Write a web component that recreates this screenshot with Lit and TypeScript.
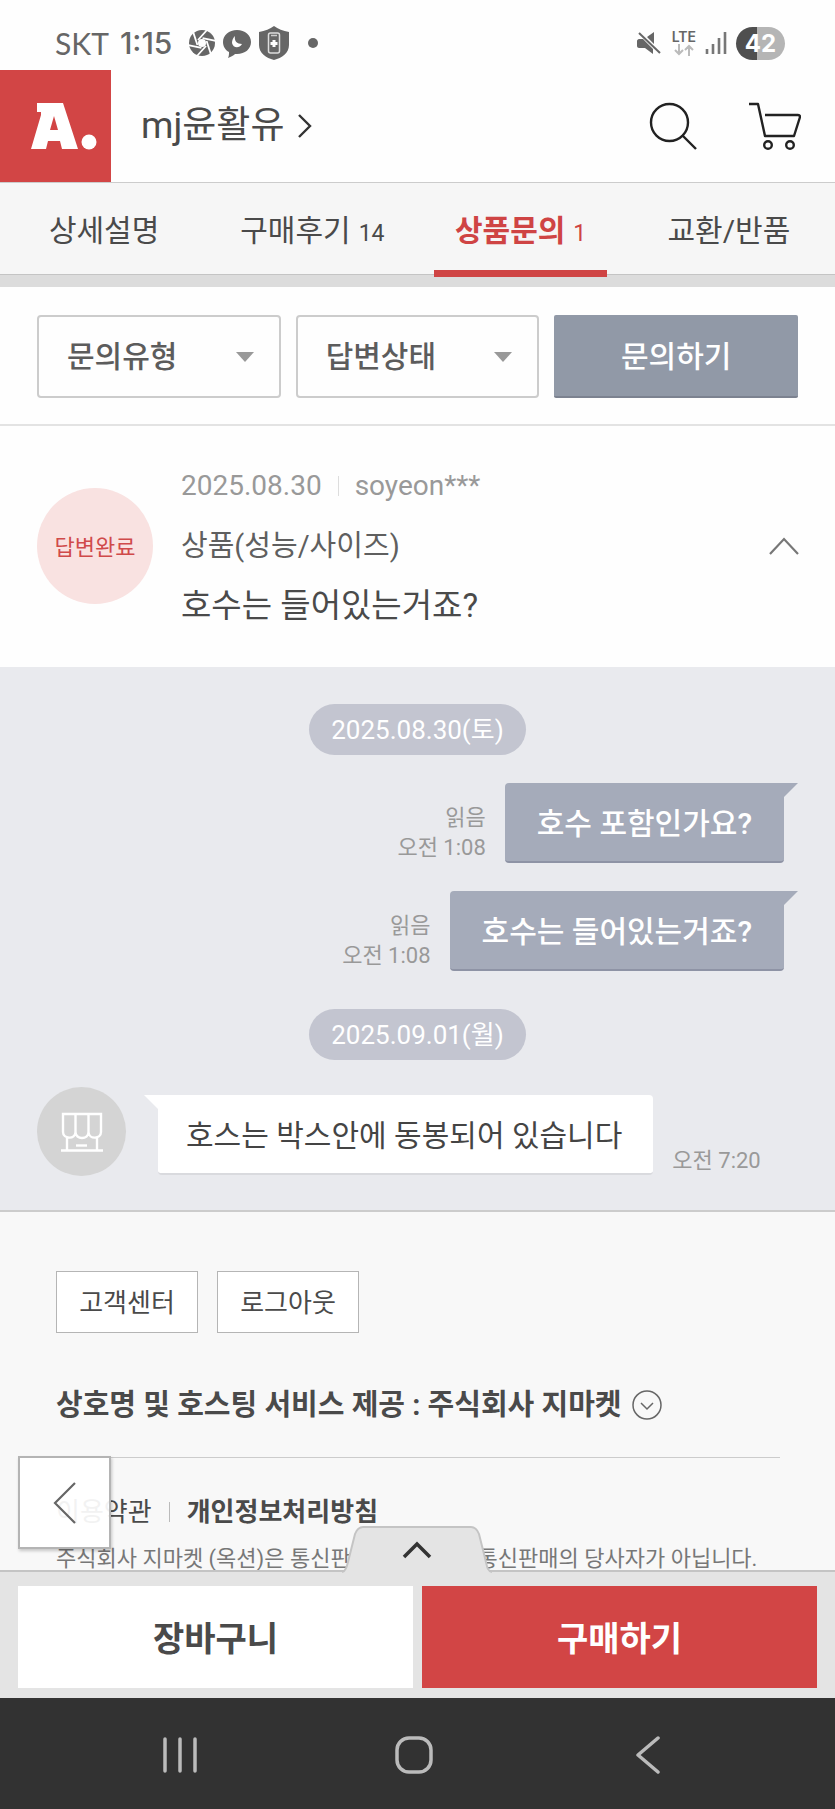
import { LitElement, html, svg, css } from "lit";
import { customElement, property } from "lit/decorators.js";

@customElement("status-bar")
class StatusBar extends LitElement {
  static styles = css`
    :host { display: flex; align-items: center; justify-content: space-between; height: 70px; padding: 16px 50px 0 55px; box-sizing: border-box; color: #666; font-family: Inter, Roboto, sans-serif; }
    .side { display: flex; align-items: center; }
    .carrier { font: 400 30px/36px Lato, sans-serif; margin-right: 11px; }
    .time { font-size: 30px; line-height: 36px; font-weight: 500; margin-right: 10px; }
    .apps { gap: 6px; }
    svg { display: block; }
    .right { gap: 9px; }
    .lte { display: flex; flex-direction: column; align-items: center; font-size: 14px; line-height: 14px; font-weight: 600; }
    .battery { display: grid; place-items: center; width: 49px; height: 33px; border-radius: 17px; background: linear-gradient(90deg, #4f4f4f 42%, #b5b5b5 42%); color: #fff; font-size: 24px; line-height: 33px; font-weight: 700; }
  `;
  render() {
    return html`
      <div class="side apps">
        <div class="side"><span class="carrier">SKT</span><span class="time">1:15</span></div>
        <svg width="28" height="28" viewBox="0 0 28 28"><circle cx="14" cy="14" r="13" fill="#666"/><circle cx="14" cy="14" r="4" fill="#fff"/>${[0, 60, 120, 180, 240, 300].map((a) => svg`<path d="M10 11L19 1" transform="rotate(${a} 14 14)" stroke="#fff" stroke-width="1.800"/>`)}</svg>
        <svg width="30" height="30" viewBox="0 0 30 30"><path d="M15 2c8 0 14 5 14 12s-6 12-14 12h-2c-1 1-4 3-7 4 1-2 1-4 1-6-4-2-6-6-6-10C1 7 7 2 15 2z" fill="#666"/><path d="M13 8c-1 5 2 8 7 8-3 5-9 4-10-1 0-3 1-5 3-7z" fill="#fff"/></svg>
        <svg width="32" height="36" viewBox="0 0 32 36"><path d="M16 1c4 3 9 5 15 6v13c0 8-7 13-15 15C8 33 1 28 1 20V7c6-1 11-3 15-6z" fill="#666"/><rect x="10.500" y="8" width="11" height="20" rx="2" fill="none" stroke="#ddd" stroke-width="1.500"/><path d="M13 10.500h6" stroke="#ccc" stroke-width="1.500"/><path d="M16 15v7M12.500 18.500h7" stroke="#fff" stroke-width="3"/></svg>
        <svg width="30" height="12" viewBox="0 0 30 12"><circle cx="17" cy="6" r="5" fill="#666"/></svg>
      </div>
      <div class="side right">
        <svg width="26" height="24" viewBox="0 0 26 24"><path d="M2 8h4l10 10v5l-8-6H2c-1 0-2-1-2-2v-5c0-1 1-2 2-2zM10 6l7-5v12z" fill="#666"/><path d="m2 2 21 20" stroke="#666" stroke-width="2"/></svg>
        <div class="lte"><span>LTE</span><svg width="20" height="12" viewBox="0 0 20 12" fill="none" stroke="#bbb" stroke-width="2"><path d="M5 0v10M1 6l4 4 4-4M15 12V2M11 6l4-4 4 4"/></svg></div>
        <svg width="22" height="24" viewBox="0 0 22 24" stroke="#777" stroke-width="2.600"><path d="M2 18v5M8 13v10M14 7v16M20 1v22"/></svg>
        <div class="battery">42</div>
      </div>`;
  }
}

@customElement("chat-bubble")
class ChatBubble extends LitElement {
  @property({ type: Boolean, reflect: true }) seller = false;
  @property() text = "";
  @property() time = "";
  static styles = css`
    :host { display: flex; align-items: flex-end; justify-content: flex-end; gap: 19px; padding-right: 14px; }
    :host([seller]) { justify-content: flex-start; align-items: flex-start; padding: 0; }
    .meta { text-align: right; color: #999; font-size: 22px; line-height: 30px; }
    :host([seller]) .meta { align-self: flex-end; }
    .bubble { position: relative; box-sizing: border-box; height: 80px; padding: 2px 32px 0; border-radius: 4px; border-bottom: 2px solid #8e93a5; background: #a5abba; color: #fff; font-size: 30px; line-height: 78px; font-weight: 500; white-space: nowrap; }
    .bubble::after { content: ""; position: absolute; top: 0; left: calc(100% - 4px); width: 18px; height: 14px; background: #a5abba; clip-path: polygon(0 0, 100% 0, 4px 100%, 0 100%); }
    .avatar { display: grid; place-items: center; width: 89px; height: 89px; border-radius: 50%; background: #d4d4d4; margin-right: 13px; }
    :host([seller]) .bubble { margin-top: 8px; background: #fff; border-color: #d9dade; color: #444; font-weight: 400; padding: 2px 31px 0 28px; }
    :host([seller]) .bubble::after { left: -14px; background: #fff; clip-path: polygon(0 0, 100% 0, 100% 100%, 14px 100%); }
  `;
  render() {
    return this.seller
      ? html`<div class="avatar"><svg width="42" height="40" viewBox="0 0 42 40" fill="none" stroke="#fff" stroke-width="2.400"><path d="M2 2h38v18c0 7-12 8-12.500 0 0 8-13 8-13 0 0 8-12.500 7-12.500 0zM14.500 2v18M27.500 2v18M6 25v13M36 25v13M0 38.500h42"/><path d="M15 33.500h11"/></svg></div>
          <div class="bubble">${this.text}</div><div class="meta">${this.time}</div>`
      : html`<div class="meta">읽음<br />${this.time}</div><div class="bubble">${this.text}</div>`;
  }
}

@customElement("app-root")
class AppRoot extends LitElement {
  static styles = css`
    :host { display: flex; flex-direction: column; height: 100vh; background: #fefefe; color: #4a4a4a; font-family: Roboto, "Noto Sans CJK KR", sans-serif; font-size: 30px; }
    * { box-sizing: border-box; }
    button, select { font-family: inherit; margin: 0; padding: 0; border: 0; background: none; color: inherit; cursor: pointer; }
    a { color: inherit; text-decoration: none; }
    svg { display: block; }
    h1, h2, p { margin: 0; font-size: inherit; font-weight: 400; }
    header { display: flex; align-items: center; height: 113px; border-bottom: 1px solid #ccc; flex: none; }
    .logo { width: 111px; height: 112px; background: #d24545; }
    .shop { display: flex; align-items: center; gap: 14px; margin-left: 30px; font-size: 37px; line-height: 44px; }
    .tools { display: flex; gap: 52px; margin-left: auto; padding-right: 34px; }
    nav.tabs { display: grid; grid-template-columns: repeat(4, 1fr); justify-items: center; height: 104px; padding: 0 2px 0 0; border-bottom: 12px solid #dcdcdc; background: #f6f6f6; flex: none; box-shadow: inset 0 -1px #c4c4c4; }
    .tabs a { height: 94px; line-height: 96px; white-space: nowrap; }
    .tabs small { margin-left: 8px; font-size: 23px; font-weight: 400; }
    .tabs .active { position: relative; padding: 0 21px; border-bottom: 7px solid #cf4444; color: #cf4444; font-weight: 700; }
    .filters { display: grid; grid-template-columns: repeat(3, 1fr); gap: 15px; padding: 28px 37px 26px; border-bottom: 2px solid #e3e3e3; flex: none; }
    .pick { display: grid; align-items: center; grid-template-columns: 1fr 45px; }
    .pick select { grid-area: 1 / 1 / 2 / 3; appearance: none; height: 83px; border: 2px solid #ccc; border-radius: 4px; padding: 0 28px; font-size: 30px; font-weight: 500; color: #5c5c5c; }
    .pick svg { grid-area: 1 / 2; pointer-events: none; }
    .ask { height: 83px; padding-bottom: 3px; border-radius: 2px; border-bottom: 2px solid #7c8290; background: #9199a7; color: #fff; font-size: 30px; font-weight: 500; }
    .question { display: flex; align-items: center; gap: 28px; padding: 30px 36px 31px 37px; flex: none; }
    .state { display: grid; place-items: center; width: 116px; height: 116px; padding-bottom: 3px; border-radius: 50%; background: #f9e2e1; color: #d04a4a; font-size: 22px; }
    .detail { display: flex; flex-direction: column; flex: 1; }
    .detail > * { line-height: 60px; }
    .byline { display: flex; align-items: center; gap: 16px; color: #999; font-size: 28px; }
    .bar { width: 1px; height: 20px; background: #ddd; }
    .kind { font-size: 29px; color: #5f5f5f; }
    .title { font-size: 33px; }
    .chat { display: flex; flex-direction: column; gap: 28px; padding: 37px 37px 34px; border-bottom: 2px solid #ccc; background: #e9eaee; flex: none; }
    .day { align-self: center; height: 51px; padding: 1px 22px 0; border-radius: 26px; background: #c3c5d0; color: #fff; font-size: 26px; line-height: 51px; }
    .day + chat-bubble[seller] { margin-top: -1px; }
    chat-bubble + .day { margin-top: 10px; }
    footer { flex: 1; min-height: 0; overflow: hidden; padding: 59px 55px 0 56px; background: #f8f8f8; }
    .links { display: flex; gap: 19px; }
    .links a { width: 142px; height: 62px; border: 1px solid #b5b5b5; background: #fff; font-size: 26px; line-height: 62px; text-align: center; }
    .company { display: flex; align-items: center; gap: 10px; margin-top: 49px; padding-bottom: 29px; border-bottom: 1px solid #ccc; }
    .company h2 { font-size: 29px; line-height: 46px; font-weight: 700; }
    .terms { display: flex; align-items: center; gap: 17px; margin-top: 34px; font-size: 26px; line-height: 40px; }
    .terms .bar { background: #bbb; }
    .note { margin-top: 11px; font-size: 22px; line-height: 32px; color: #777; white-space: nowrap; }
    .buybar { position: relative; display: grid; grid-template-columns: 1fr 1fr; gap: 9px; height: 128px; padding: 14px 18px 10px; border-top: 2px solid #c4c4c4; background: #e4e4e4; flex: none; }
    .buybar .cart, .buybar .buy { padding-bottom: 2px; background: #fff; font-size: 34px; font-weight: 700; }
    .buybar .buy { background: #d24545; color: #fff; }
    .pull { position: absolute; left: 50%; bottom: 100%; margin: 0 0 -1px -76px; }
    .back { position: absolute; left: 18px; bottom: 100%; margin-bottom: 23px; display: grid; place-items: center; width: 93px; height: 93px; border: 2px solid #b4b4b4; background: rgba(255, 255, 255, .93); box-shadow: 1px 2px 3px rgba(0, 0, 0, .2); }
    .keys { display: grid; grid-template-columns: 1fr 1fr 1fr; align-items: center; height: 111px; padding: 3px 70px 0 63px; background: #323232; flex: none; }
    .keys button { display: grid; place-items: center; height: 60px; }
  `;
  render() {
    return html`
      <status-bar></status-bar>
      <header>
        <a class="logo" href="#" aria-label="홈"><svg width="111" height="112" viewBox="0 0 111 112" fill="#fff"><path fill-rule="evenodd" d="M37 33h26l15 46H62l-2-8H48l-2 8H31l10-34v-3h-4zM54 46l-4 14h8z"/><circle cx="89" cy="72" r="7.500"/></svg></a>
        <a class="shop" href="#"><h1>mj윤활유</h1><svg width="14" height="26" viewBox="0 0 14 26" fill="none" stroke="#333" stroke-width="2.400"><path d="M1 2l11 11L1 24"/></svg></a>
        <div class="tools">
          <button aria-label="검색"><svg width="48" height="48" viewBox="0 0 48 48" fill="none" stroke="#222" stroke-width="2.400"><circle cx="20.500" cy="20.500" r="18.500"/><path d="M33 33l14 14"/></svg></button>
          <button aria-label="장바구니 보기"><svg width="52" height="48" viewBox="0 0 52 48" fill="none" stroke="#222" stroke-width="2.400" stroke-linejoin="round"><path d="M0 2h9l7 32h29l6-19c0-2-1-2-2-2H16"/><circle cx="19" cy="43" r="3.800"/><circle cx="41" cy="43" r="3.800"/></svg></button>
        </div>
      </header>
      <nav class="tabs">
        <a href="#">상세설명</a>
        <a href="#">구매후기<small>14</small></a>
        <a href="#" class="active">상품문의<small>1</small></a>
        <a href="#">교환/반품</a>
      </nav>
      <div class="filters">
        ${["문의유형", "답변상태"].map((t) => html`<div class="pick"><select aria-label=${t}><option>${t}</option></select><svg width="18" height="10" viewBox="0 0 18 10"><path d="M0 0h18L9 10z" fill="#999"/></svg></div>`)}
        <button class="ask">문의하기</button>
      </div>
      <section class="question">
        <div class="state">답변완료</div>
        <div class="detail">
          <div class="byline"><span>2025.08.30</span><i class="bar"></i><span>soyeon***</span></div>
          <p class="kind">상품(성능/사이즈)</p>
          <p class="title">호수는 들어있는거죠?</p>
        </div>
        <button aria-label="접기"><svg width="30" height="18" viewBox="0 0 30 18" fill="none" stroke="#777" stroke-width="2.200"><path d="M1 17L15 2l14 15"/></svg></button>
      </section>
      <section class="chat">
        <div class="day">2025.08.30(토)</div>
        <chat-bubble text="호수 포함인가요?" time="오전 1:08"></chat-bubble>
        <chat-bubble text="호수는 들어있는거죠?" time="오전 1:08"></chat-bubble>
        <div class="day">2025.09.01(월)</div>
        <chat-bubble seller text="호스는 박스안에 동봉되어 있습니다" time="오전 7:20"></chat-bubble>
      </section>
      <footer>
        <div class="links"><a href="#">고객센터</a><a href="#">로그아웃</a></div>
        <div class="company"><h2>상호명 및 호스팅 서비스 제공 : 주식회사 지마켓</h2><button aria-label="사업자 정보 펼치기"><svg width="30" height="30" viewBox="0 0 30 30" fill="none" stroke="#666" stroke-width="1.500"><circle cx="15" cy="15" r="14"/><path d="M9 13l6 6 6-6"/></svg></button></div>
        <div class="terms"><a href="#">이용약관</a><i class="bar"></i><a href="#"><b>개인정보처리방침</b></a></div>
        <p class="note">주식회사 지마켓 (옥션)은 통신판매중개자이며 통신판매의 당사자가 아닙니다.</p>
      </footer>
      <div class="buybar">
        <button class="back" aria-label="뒤로"><svg width="24" height="42" viewBox="0 0 24 42" fill="none" stroke="#666" stroke-width="2.200"><path d="M22 1L2 21l20 20"/></svg></button>
        <button class="pull" aria-label="옵션 열기"><svg width="150" height="47" viewBox="0 0 150 47"><path d="M0 46c4-1 5-6 7-14l6-24c2-5 4-7 8-7h108c4 0 6 2 8 7l6 24c2 8 2 13 7 14v1H0z" fill="#e4e4e4"/><path d="M0 46c4-1 5-6 7-14l6-24c2-5 4-7 8-7h108c4 0 6 2 8 7l6 24c2 8 2 13 7 14" fill="none" stroke="#c4c4c4" stroke-width="2"/><path d="M62 31l13-13 13 13" fill="none" stroke="#333" stroke-width="3.500"/></svg></button>
        <button class="cart">장바구니</button>
        <button class="buy">구매하기</button>
      </div>
      <nav class="keys">
        <button aria-label="최근 앱"><svg width="34" height="36" viewBox="0 0 34 36" stroke="#bbb" stroke-width="3.500" stroke-linecap="round"><path d="M2 2v32M17 2v32M32 2v32"/></svg></button>
        <button aria-label="홈 화면"><svg width="38" height="38" viewBox="0 0 38 38" fill="none" stroke="#bbb" stroke-width="3.500"><rect x="2" y="2" width="34" height="34" rx="12"/></svg></button>
        <button aria-label="이전"><svg width="24" height="38" viewBox="0 0 24 38" fill="none" stroke="#bbb" stroke-width="3.500" stroke-linecap="round" stroke-linejoin="round"><path d="M22 2L2 19l20 17"/></svg></button>
      </nav>`;
  }
}
